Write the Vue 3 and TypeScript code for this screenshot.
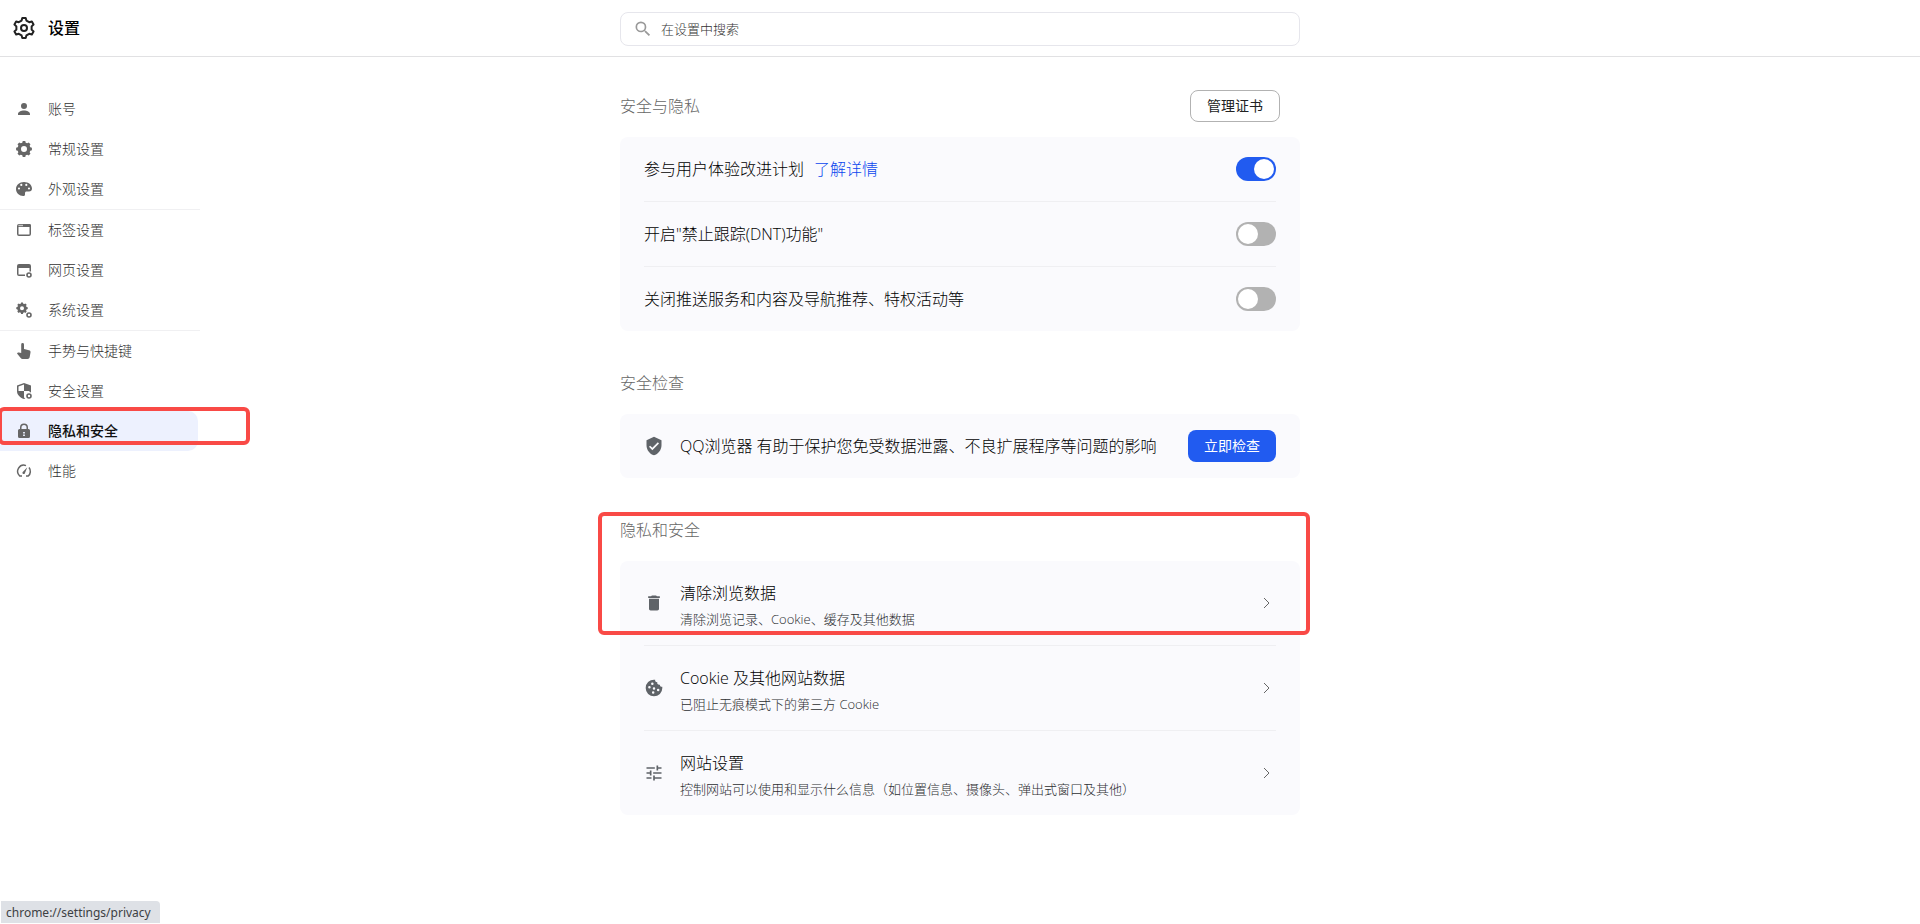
<script setup lang="ts">
import { ref } from 'vue'

interface Shape {
  d: string
  line?: number
  soft?: boolean
}

interface NavItem {
  label: string
  shapes: Shape[]
  active?: boolean
}

interface Preference {
  id: string
  label: string
  link?: string
  on: boolean
}

interface PrivacyRow {
  title: string
  note: string
  icon: string
}

const circle = (cx: number, cy: number, r: number): string =>
  `M${cx - r} ${cy}a${r} ${r} 0 1 0 ${2 * r} 0a${r} ${r} 0 1 0 ${-2 * r} 0z`

// Cog outline: each tooth is a trapezoid between the root and tip radii.
function cog(cx: number, cy: number, tip: number, root: number, teeth: number, base = 0.3, top = 0.18): string {
  const points: string[] = []
  for (let i = 0; i < teeth; i++) {
    const mid = i / teeth
    const corners: [number, number][] = [
      [-base, root],
      [-top, tip],
      [top, tip],
      [base, root],
    ]
    for (const [shift, radius] of corners) {
      const angle = (mid + shift / teeth) * Math.PI * 2 - Math.PI / 2
      points.push(`${(cx + radius * Math.cos(angle)).toFixed(2)} ${(cy + radius * Math.sin(angle)).toFixed(2)}`)
    }
  }
  return `M${points.join('L')}z`
}

const badge: Shape = { d: circle(13, 13, 2), line: 1.6 }

const navGroups: NavItem[][] = [
  [
    {
      label: '账号',
      shapes: [{ d: circle(8, 5, 3) + 'M2 14v-1C2 10.600 5 9.400 8 9.400s6 1.200 6 3.600v1z' }],
    },
    { label: '常规设置', shapes: [{ d: cog(8, 8, 8, 6.5, 8, 0.34, 0.2) + circle(8, 8, 3) }] },
    {
      label: '外观设置',
      shapes: [
        {
          d:
            'M8 1C3.500 1 0 4 0 8s3.300 7 7.200 7c1 0 1.800-.6 1.800-1.600v-1.200c0-1 .6-1.700 1.600-1.700H13c1.900 0 3-1 3-3C16 3.800 12.500 1 8 1z' +
            circle(5.3, 3.9, 1.1) +
            circle(10.3, 3.9, 1.1) +
            circle(3, 7.5, 1.1) +
            circle(13, 7.5, 1.1),
        },
      ],
    },
  ],
  [
    {
      label: '标签设置',
      shapes: [
        { d: 'M3 2.750h10q1.250 0 1.250 1.250v8q0 1.250-1.250 1.250H3q-1.250 0-1.250-1.250V4q0-1.250 1.250-1.250z', line: 1.5 },
        { d: 'M7 2h6.500q1.500 0 1.500 1.500V5H1V4h6z' },
        { d: 'M2.500 2.800h4.500v1.400h-4.500z', soft: true },
      ],
    },
    {
      label: '网页设置',
      shapes: [
        { d: 'M3 2h10q2 0 2 2v5.500h-1.500V6h-11v6.500H9V14H3q-2 0-2-2V4q0-2 2-2z' },
        badge,
      ],
    },
    { label: '系统设置', shapes: [{ d: cog(6, 6.2, 5.8, 4.7, 8, 0.34, 0.2) + circle(6, 6.2, 2) }, badge] },
  ],
  [
    {
      label: '手势与快捷键',
      shapes: [
        {
          d: 'M5.200 1.500a1.400 1.400 0 0 1 2.800 0V6l5 1.200c1.200.3 1.700 1 1.500 2.200l-.8 4.600c-.2 1.300-.9 2-2.200 2H6.500c-.8 0-1.300-.3-1.800-.9L1 10.400l.6-.6c.4-.4.8-.5 1.300-.3l2.300.6z',
        },
      ],
    },
    {
      label: '安全设置',
      shapes: [
        {
          d: 'M8 0l7 2.500v5.700c0 .5 0 .9-.1 1.300A4 4 0 0 0 13.500 9V8H8v6.600l1.300.9L8 16C3.800 14.500 1 11.500 1 8.200V2.500zM8 1.600L2.500 3.600V8H8z',
        },
        badge,
      ],
    },
    {
      label: '隐私和安全',
      active: true,
      shapes: [
        { d: 'M4.750 7V4.500a3.250 3.250 0 0 1 6.500 0V7', line: 1.5 },
        { d: 'M3.500 6h9q1.500 0 1.500 1.500v6q0 1.500-1.500 1.500h-9Q2 15 2 13.500v-6Q2 6 3.500 6zM7.100 9v1.500h1.800V9zM7.100 11.500V13h1.800v-1.500z' },
      ],
    },
    {
      label: '性能',
      shapes: [
        { d: 'M10 2.600A6.200 6.200 0 0 0 3.700 13H6M10 13H12.300A6.200 6.200 0 0 0 13 4.500', line: 1.5 },
        { d: 'M11.300 4.200L8.900 10.200a1.300 1.300 0 0 1-2.400-1z' },
      ],
    },
  ],
]

const preferences = ref<Preference[]>([
  { id: 'experience', label: '参与用户体验改进计划', link: '了解详情', on: true },
  { id: 'dnt', label: '开启"禁止跟踪(DNT)功能"', on: false },
  { id: 'push', label: '关闭推送服务和内容及导航推荐、特权活动等', on: false },
])

const shieldIcon =
  'M12 1L3 5v6c0 5.550 3.840 10.740 9 12 5.160-1.260 9-6.450 9-12V5l-9-4zm-2 16l-4-4 1.410-1.410L10 14.170l6.590-6.590L18 9l-8 8z'

const privacyRows: PrivacyRow[] = [
  {
    title: '清除浏览数据',
    note: '清除浏览记录、Cookie、缓存及其他数据',
    icon: 'M6 19c0 1.100.9 2 2 2h8c1.100 0 2-.9 2-2V7H6v12zM19 4h-3.500l-1-1h-5l-1 1H5v2h14V4z',
  },
  {
    title: 'Cookie 及其他网站数据',
    note: '已阻止无痕模式下的第三方 Cookie',
    icon:
      'M12 2a10 10 0 1 0 10 10c0-.6 0-1.100-.1-1.600-1.600.3-2.900-.6-2.900-2.400-2.300.3-3.600-1.200-3-3-2 0-3-1.300-2.600-2.900C12.900 2 12.500 2 12 2z' +
      circle(10, 7, 1.5) +
      circle(6.5, 11, 1.5) +
      circle(12, 12.5, 1.5) +
      circle(17, 14.5, 1.5) +
      circle(11, 17.5, 1.5),
  },
  {
    title: '网站设置',
    note: '控制网站可以使用和显示什么信息（如位置信息、摄像头、弹出式窗口及其他）',
    icon: 'M3 17v2h6v-2H3zM3 5v2h10V5H3zm10 16v-2h8v-2h-8v-2h-2v6h2zM7 9v2H3v2h4v2h2V9H7zm14 4v-2H11v2h10zm-6-4h2V7h4V5h-4V3h-2v6z',
  },
]
</script>

<template>
  <div class="page">
    <header class="topbar">
      <div class="brand">
        <svg class="brand-icon" viewBox="0 0 24 24" aria-hidden="true">
          <path :d="cog(12, 12, 10.2, 7.8, 6, 0.3, 0.16)" />
          <circle cx="12" cy="12" r="3" />
        </svg>
        <h1>设置</h1>
      </div>
      <label class="search">
        <svg viewBox="0 0 24 24" aria-hidden="true">
          <path
            d="M15.500 14h-.79l-.28-.27A6.470 6.470 0 0 0 16 9.500 6.500 6.500 0 1 0 9.500 16c1.610 0 3.090-.59 4.230-1.570l.27.28v.79l5 4.990L20.490 19l-4.990-5zm-6 0a4.500 4.500 0 1 1 0-9 4.500 4.500 0 0 1 0 9z"
          />
        </svg>
        <input type="search" placeholder="在设置中搜索" aria-label="在设置中搜索" />
      </label>
    </header>

    <div class="body">
      <nav class="sidebar">
        <ul v-for="(group, g) in navGroups" :key="g">
          <li v-for="item in group" :key="item.label" :class="{ active: item.active }">
            <a href="#">
              <svg viewBox="0 0 16 16" aria-hidden="true">
                <path
                  v-for="(shape, s) in item.shapes"
                  :key="s"
                  :d="shape.d"
                  :class="{ line: shape.line, soft: shape.soft }"
                  :stroke-width="shape.line"
                />
              </svg>
              <span>{{ item.label }}</span>
            </a>
            <span v-if="item.active" class="marker nav-marker"></span>
          </li>
        </ul>
      </nav>

      <main class="content">
        <section>
          <div class="heading">
            <h2>安全与隐私</h2>
            <button type="button" class="outline">管理证书</button>
          </div>
          <div class="card">
            <div v-for="pref in preferences" :key="pref.id" class="row">
              <label :for="pref.id">{{ pref.label }}</label>
              <a v-if="pref.link" class="more" href="#">{{ pref.link }}</a>
              <input :id="pref.id" v-model="pref.on" class="toggle" type="checkbox" role="switch" />
            </div>
          </div>
        </section>

        <section>
          <div class="heading"><h2>安全检查</h2></div>
          <div class="card">
            <div class="row">
              <svg class="row-icon" viewBox="0 0 24 24" aria-hidden="true"><path :d="shieldIcon" /></svg>
              <p class="row-text">QQ浏览器 有助于保护您免受数据泄露、不良扩展程序等问题的影响</p>
              <button type="button" class="primary">立即检查</button>
            </div>
          </div>
        </section>

        <section class="privacy">
          <div class="heading"><h2>隐私和安全</h2></div>
          <div class="card">
            <a v-for="row in privacyRows" :key="row.title" href="#" class="row tall">
              <svg class="row-icon" viewBox="0 0 24 24" aria-hidden="true"><path :d="row.icon" /></svg>
              <span class="row-text">
                <span class="title">{{ row.title }}</span>
                <span class="note">{{ row.note }}</span>
              </span>
              <svg class="chevron" viewBox="0 0 20 20" aria-hidden="true"><path d="M8 5l5 5-5 5" /></svg>
            </a>
          </div>
          <span class="marker section-marker"></span>
        </section>
      </main>
    </div>

    <div class="status">chrome://settings/privacy</div>
  </div>
</template>

<style>
body {
  margin: 0;
  background: #fff;
}
</style>

<style scoped>
.page {
  min-height: 100vh;
  color: #000;
  font-family: 'Open Sans', 'Noto Sans CJK SC', sans-serif;
  font-size: 16px;
  font-weight: 300;
  line-height: 24px;
}

h1,
h2,
p,
ul {
  margin: 0;
  padding: 0;
}

a {
  color: inherit;
  text-decoration: none;
}

button,
input {
  font: inherit;
}

.topbar {
  display: grid;
  grid-template-columns: 1fr minmax(0, 680px) 1fr;
  align-items: center;
  height: 56px;
  border-bottom: 1px solid #e1e1e3;
}

.brand {
  display: flex;
  align-items: center;
  gap: 12px;
  padding-left: 12px;
}

.brand-icon {
  width: 24px;
  height: 24px;
  fill: none;
  stroke: #222;
  stroke-width: 2;
  stroke-linejoin: round;
}

h1 {
  font-size: 16px;
  font-weight: 500;
}

.search {
  display: flex;
  align-items: center;
  gap: 8px;
  box-sizing: border-box;
  height: 34px;
  margin-top: 2px;
  padding: 0 12px;
  border: 1px solid #e6e6ec;
  border-radius: 8px;
}

.search svg {
  width: 20px;
  height: 20px;
  fill: #999;
}

.search input {
  flex: 1;
  min-width: 0;
  padding: 0;
  border: 0;
  outline: 0;
  background: transparent;
  font-size: 13px;
}

.search input::placeholder {
  color: #333;
  opacity: 1;
}

.body {
  display: grid;
  grid-template-columns: 1fr minmax(0, 680px) 1fr;
}

.sidebar {
  width: 200px;
  padding-top: 32px;
}

.sidebar ul {
  list-style: none;
}

.sidebar ul + ul {
  border-top: 1px solid #f0f0f2;
}

.sidebar li {
  position: relative;
}

.sidebar a {
  display: flex;
  align-items: center;
  gap: 16px;
  width: 182px;
  height: 40px;
  padding-left: 16px;
  border-radius: 0 10px 10px 0;
  color: #333;
  font-size: 14px;
}

.sidebar .active a {
  background: #edf1fe;
  color: #111;
  font-weight: 500;
}

.sidebar svg {
  width: 16px;
  height: 16px;
  overflow: visible;
  fill: #666;
  fill-rule: evenodd;
}

.sidebar .line {
  fill: none;
  stroke: #666;
}

.sidebar .soft {
  fill: #c4c4c4;
}

.content {
  padding: 33px 0 40px;
}

section + section {
  margin-top: 36px;
}

.heading {
  display: flex;
  align-items: center;
  justify-content: space-between;
  height: 32px;
  margin-bottom: 15px;
  padding-right: 20px;
}

h2 {
  color: #666;
  font-size: 16px;
  font-weight: 300;
}

button {
  height: 32px;
  padding: 0 16px;
  border: 0;
  border-radius: 8px;
  font-size: 14px;
  font-weight: 400;
}

.outline {
  border: 1px solid #b2b2b2;
  background: #fff;
  color: #222;
}

.primary {
  background: #215bf0;
  color: #fff;
}

.card {
  padding: 0 24px;
  border-radius: 8px;
  background: #fafafd;
}

.row {
  display: flex;
  align-items: center;
  height: 64px;
}

.row.tall {
  height: 84px;
}

.row + .row {
  border-top: 1px solid #efeff2;
}

.more {
  margin-left: 10px;
  color: #0a46ee;
}

.toggle {
  appearance: none;
  width: 40px;
  height: 24px;
  margin: 0 0 0 auto;
  padding: 2px;
  border-radius: 12px;
  background: #b2b2b2;
}

.toggle::before {
  content: '';
  display: block;
  width: 20px;
  height: 20px;
  border-radius: 50%;
  background: #fff;
}

.toggle:checked {
  background: #215bf0;
}

.toggle:checked::before {
  margin-left: auto;
}

.row-icon {
  width: 20px;
  height: 20px;
  margin-right: 16px;
  fill: #5f6368;
  fill-rule: evenodd;
}

.row-text {
  display: flex;
  flex: 1;
  flex-direction: column;
}

.title {
  line-height: 28px;
}

.note {
  color: #2c2e31;
  font-size: 13px;
  line-height: 24px;
}

.tall .row-text {
  padding-top: 4px;
}

.chevron {
  width: 20px;
  height: 20px;
  fill: none;
  stroke: #666;
  stroke-width: 1;
}

.privacy {
  position: relative;
}

.marker {
  position: absolute;
  box-sizing: border-box;
  border: 4px solid #f94a46;
  border-radius: 6px;
  pointer-events: none;
}

.nav-marker {
  top: -4px;
  left: -2px;
  width: 252px;
  height: 38px;
}

.section-marker {
  top: -2px;
  right: -10px;
  left: -22px;
  height: 123px;
}

.status {
  position: fixed;
  bottom: 1px;
  left: 1px;
  padding: 2px 9px 0 5px;
  border-radius: 0 4px 0 0;
  background: #dee1e6;
  color: #3c4043;
  font-family: 'Noto Sans', sans-serif;
  font-size: 12px;
  font-weight: 400;
  line-height: 20px;
}
</style>
